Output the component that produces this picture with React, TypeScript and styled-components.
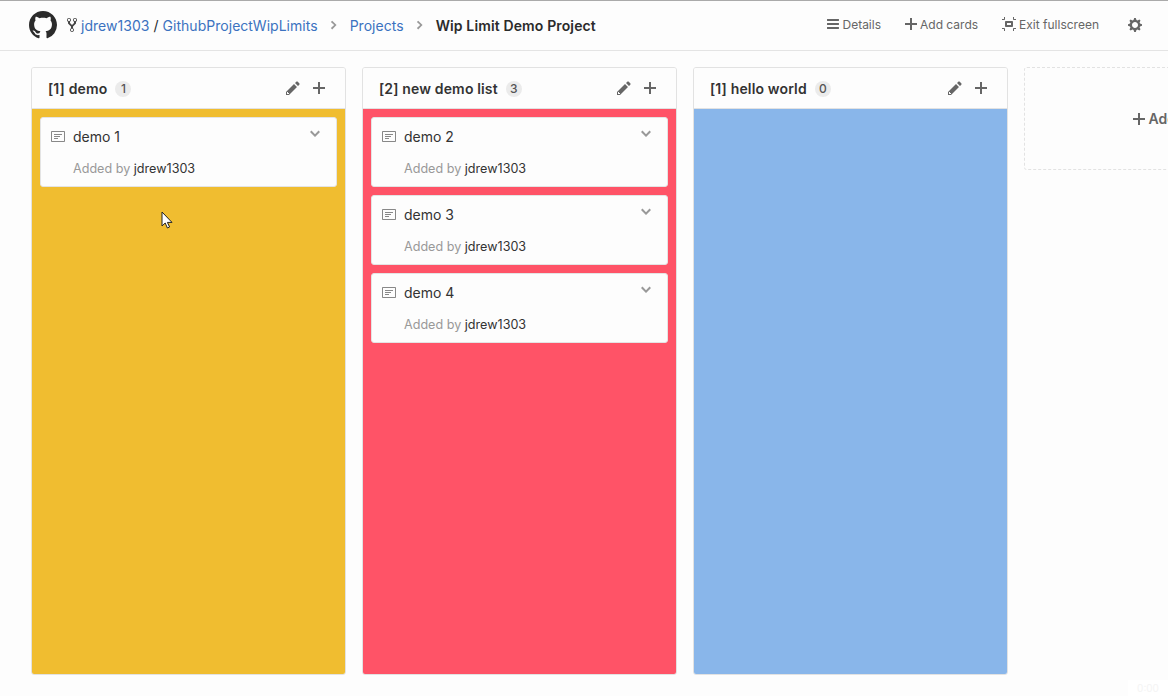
import React from "react";
import styled, { createGlobalStyle } from "styled-components";

const paths = {
  mark: "M8 0C3.58 0 0 3.58 0 8c0 3.54 2.29 6.53 5.47 7.59.4.07.55-.17.55-.38 0-.19-.01-.82-.01-1.49-2.01.37-2.53-.49-2.69-.94-.09-.23-.48-.94-.82-1.13-.28-.15-.68-.52-.01-.53.63-.01 1.08.58 1.23.82.72 1.21 1.87.87 2.33.66.07-.52.28-.87.51-1.07-1.78-.2-3.64-.89-3.64-3.95 0-.87.31-1.59.82-2.15-.08-.2-.36-1.02.08-2.12 0 0 .67-.21 2.2.82.64-.18 1.32-.27 2-.27.68 0 1.36.09 2 .27 1.53-1.04 2.2-.82 2.2-.82.44 1.1.16 1.92.08 2.12.51.56.82 1.27.82 2.15 0 3.07-1.87 3.75-3.65 3.95.29.25.54.73.54 1.48 0 1.07-.01 1.93-.01 2.2 0 .21.15.46.55.38A8.013 8.013 0 0 0 16 8c0-4.42-3.58-8-8-8z",
  fork: "M8 1a1.993 1.993 0 0 0-1 3.72V6L5 8 3 6V4.72A1.993 1.993 0 0 0 2 1a1.993 1.993 0 0 0-1 3.72V6.5l3 3v1.78A1.993 1.993 0 0 0 5 15a1.993 1.993 0 0 0 1-3.72V9.5l3-3V4.72A1.993 1.993 0 0 0 8 1zM2 4.2C1.34 4.2.8 3.65.8 3c0-.65.55-1.2 1.2-1.2.65 0 1.2.55 1.2 1.2 0 .65-.55 1.2-1.2 1.2zm3 10c-.66 0-1.2-.55-1.2-1.2 0-.65.55-1.2 1.2-1.2.65 0 1.2.55 1.2 1.2 0 .65-.55 1.2-1.2 1.2zm3-10c-.66 0-1.2-.55-1.2-1.2 0-.65.55-1.2 1.2-1.2.65 0 1.2.55 1.2 1.2 0 .65-.55 1.2-1.2 1.2z",
  pencil: "M0 12v3h3l8-8-3-3-8 8zm3 2H1v-2h1v1h1v1zm10.3-9.3L12 6 9 3l1.3-1.3a.996.996 0 0 1 1.41 0l1.59 1.59c.39.39.39 1.02 0 1.41z",
  gear: "M14 8.77v-1.6l-1.94-.64-.45-1.09.88-1.84-1.13-1.13-1.81.91-1.09-.45-.69-1.92h-1.6l-.63 1.94-1.11.45-1.84-.88-1.13 1.13.91 1.81-.45 1.09L0 7.23v1.59l1.94.64.45 1.09-.88 1.84 1.13 1.13 1.81-.91 1.09.45.69 1.92h1.59l.63-1.94 1.11-.45 1.84.88 1.13-1.13-.92-1.81.47-1.09L14 8.75v.02zM7 11c-1.66 0-3-1.34-3-3s1.34-3 3-3 3 1.34 3 3-1.34 3-3 3z",
  bars: "M11.41 9H.59C0 9 0 8.59 0 8c0-.59 0-1 .59-1H11.4c.59 0 .59.41.59 1 0 .59 0 1-.59 1h.01zm0-4H.59C0 5 0 4.59 0 4c0-.59 0-1 .59-1H11.4c.59 0 .59.41.59 1 0 .59 0 1-.59 1h.01zM.59 11H11.4c.59 0 .59.41.59 1 0 .59 0 1-.59 1H.59C0 13 0 12.59 0 12c0-.59 0-1 .59-1z",
  plus: "M12 9H7v5H5V9H0V7h5V2h2v5h5v2z",
  screen: "M2 4H0V3h2V1h1v2c0 .547-.453 1-1 1zm0 8H0v1h2v2h1v-2c0-.547-.453-1-1-1zm9-2c0 .547-.453 1-1 1H4c-.547 0-1-.453-1-1V6c0-.547.453-1 1-1h6c.547 0 1 .453 1 1v4zM9 7H5v2h4V7zm2 6v2h1v-2h2v-1h-2c-.547 0-1 .453-1 1zm1-10V1h-1v2c0 .547.453 1 1 1h2V3h-2z",
  note: "M3 10h4V9H3v1zm0-2h6V7H3v1zm0-2h8V5H3v1zm10 6H1V3h12v9zM1 2c-.55 0-1 .45-1 1v9c0 .55.45 1 1 1h12c.55 0 1-.45 1-1V3c0-.55-.45-1-1-1H1z",
  down: "M5 11L0 6l1.5-1.5L5 8.25 8.5 4.5 10 6l-5 5z",
  right: "M7.5 8l-5 5L1 11.5 4.75 8 1 4.5 2.5 3l5 5z",
};

const widths: Record<keyof typeof paths, number> = {
  mark: 16, fork: 10, pencil: 14, gear: 14, bars: 12, plus: 12, screen: 14, note: 14, down: 10, right: 8,
};

function Octicon({ name, height = 16, color = "#666" }: { name: keyof typeof paths; height?: number; color?: string }) {
  const w = widths[name];
  return (
    <svg width={(w * height) / 16} height={height} viewBox={`0 0 ${w} 16`} fill={color} style={{ flex: "none", display: "block" }}>
      <path fillRule="evenodd" d={paths[name]} />
    </svg>
  );
}

const GlobalStyle = createGlobalStyle`
  html, body {
    margin: 0;
    background: #fdfdfd;
  }
  body {
    font-family: Inter, "Liberation Sans", sans-serif;
    font-size: 14px;
    color: #24292e;
  }
`;

const Page = styled.div`
  position: relative;
  width: 1168px;
  height: 696px;
  overflow: hidden;
  background: #fdfdfd;
  border-top: 1px solid #aaaaaa;
  box-sizing: border-box;
`;

const TopBar = styled.header`
  height: 50px;
  box-sizing: border-box;
  border-bottom: 1px solid #e4e4e4;
  padding: 0 26px 1px 29px;
  display: flex;
  align-items: center;
  justify-content: space-between;
`;

const Crumbs = styled.nav`
  display: flex;
  align-items: center;
`;

const Logo = styled.span`
  margin-right: 10px;
`;

const ForkIcon = styled.span`
  margin-right: 4px;
`;

const Link = styled.a`
  color: #3b72c0;
  font-size: 14px;
  letter-spacing: 0.03px;
`;

const Slash = styled.span`
  margin: 0 4px;
  color: #24292e;
`;

const Sep = styled.span`
  margin: 0 13px 0 12px;
`;

const Current = styled.span`
  font-weight: 600;
  color: #2b2b2b;
  letter-spacing: 0.13px;
`;

const Actions = styled.div`
  display: flex;
  align-items: center;
  gap: 24px;
`;

const Action = styled.span`
  display: flex;
  align-items: center;
  gap: 3px;
  margin-bottom: 2px;
  font-size: 12px;
  color: #666;
`;

const Settings = styled(Action)`
  margin: 0 0 0 5px;
`;

const Board = styled.main`
  display: flex;
  gap: 16px;
  padding: 16px 0 0 31px;
  width: 1400px;
  height: 625px;
  box-sizing: border-box;
`;

const Column = styled.section`
  width: 315px;
  flex: none;
  height: 608px;
  box-sizing: border-box;
  border: 1px solid #e2e2e2;
  border-radius: 3px;
  overflow: hidden;
  display: flex;
  flex-direction: column;
`;

const ColumnHead = styled.div`
  height: 41px;
  flex: none;
  box-sizing: border-box;
  border-bottom: 1px solid #e2e2e2;
  padding: 0 20px 0 16px;
  display: flex;
  align-items: center;
  background: #fdfdfd;
`;

const ColumnTitle = styled.span`
  font-weight: 600;
  font-size: 14px;
  color: #333;
  letter-spacing: 0.15px;
`;

const Count = styled.span`
  margin: 2px 0 0 8px;
  min-width: 16px;
  height: 16px;
  box-sizing: border-box;
  padding: 0 4px;
  border-radius: 8px;
  background: #ebebeb;
  color: #555;
  font-size: 12px;
  font-weight: 500;
  line-height: 16px;
  text-align: center;
`;

const HeadIcons = styled.div`
  margin-left: auto;
  display: flex;
  align-items: center;
  gap: 13px;
`;

const CardList = styled.div<{ $bg: string }>`
  flex: 1;
  background: ${(p) => p.$bg};
  padding: 8px;
  display: flex;
  flex-direction: column;
  gap: 8px;
`;

const Card = styled.article`
  height: 70px;
  box-sizing: border-box;
  background: #fdfdfd;
  border: 1px solid #e4e4e4;
  border-radius: 3px;
  padding: 10px 16px 0 10px;
`;

const CardTop = styled.div`
  display: flex;
  align-items: center;
  height: 18px;
`;

const CardTitle = styled.span`
  margin: -2px 0 0 8px;
  font-size: 14px;
  color: #333;
`;

const Chevron = styled.span`
  margin-left: auto;
  margin-top: -6px;
`;

const CardMeta = styled.div`
  margin: 15px 0 0 22px;
  font-size: 12.6px;
  color: #999;
  white-space: nowrap;
`;

const Author = styled.span`
  color: #333;
`;

const AddColumn = styled.div`
  width: 315px;
  flex: none;
  height: 103px;
  box-sizing: border-box;
  border: 1px dashed #e2e2e2;
  border-radius: 3px;
  display: flex;
  align-items: center;
  justify-content: center;
  gap: 3px;
  font-size: 14px;
  font-weight: 600;
  color: #666;
`;

const Cursor = styled.svg`
  position: absolute;
  left: 161px;
  top: 210px;
`;

const Timer = styled.div`
  position: absolute;
  right: 0;
  bottom: 0;
  width: 40px;
  height: 16px;
  background: #fff;
  color: #f4f4f4;
  font-size: 10px;
  line-height: 16px;
  text-align: center;
`;

type Item = { title: string };
type Col = { name: string; bg: string; items: Item[] };

const columns: Col[] = [
  { name: "[1] demo", bg: "#f0bd30", items: [{ title: "demo 1" }] },
  { name: "[2] new demo list", bg: "#ff5367", items: [{ title: "demo 2" }, { title: "demo 3" }, { title: "demo 4" }] },
  { name: "[1] hello world", bg: "#89b6ea", items: [] },
];

export default function App() {
  return (
    <Page>
      <GlobalStyle />
      <TopBar>
        <Crumbs>
          <Logo>
            <Octicon name="mark" height={28} color="#2b2b2b" />
          </Logo>
          <ForkIcon>
            <Octicon name="fork" height={16} color="#444" />
          </ForkIcon>
          <Link>jdrew1303</Link>
          <Slash>/</Slash>
          <Link>GithubProjectWipLimits</Link>
          <Sep>
            <Octicon name="right" height={14} color="#999" />
          </Sep>
          <Link>Projects</Link>
          <Sep>
            <Octicon name="right" height={14} color="#999" />
          </Sep>
          <Current>Wip Limit Demo Project</Current>
        </Crumbs>
        <Actions>
          <Action>
            <Octicon name="bars" />
            Details
          </Action>
          <Action>
            <Octicon name="plus" />
            Add cards
          </Action>
          <Action>
            <Octicon name="screen" />
            Exit fullscreen
          </Action>
          <Settings>
            <Octicon name="gear" />
          </Settings>
        </Actions>
      </TopBar>
      <Board>
        {columns.map((col) => (
          <Column key={col.name}>
            <ColumnHead>
              <ColumnTitle>{col.name}</ColumnTitle>
              <Count>{col.items.length}</Count>
              <HeadIcons>
                <Octicon name="pencil" color="#666" />
                <Octicon name="plus" color="#666" />
              </HeadIcons>
            </ColumnHead>
            <CardList $bg={col.bg}>
              {col.items.map((item) => (
                <Card key={item.title}>
                  <CardTop>
                    <Octicon name="note" color="#888" />
                    <CardTitle>{item.title}</CardTitle>
                    <Chevron>
                      <Octicon name="down" color="#999" />
                    </Chevron>
                  </CardTop>
                  <CardMeta>
                    Added by <Author>jdrew1303</Author>
                  </CardMeta>
                </Card>
              ))}
            </CardList>
          </Column>
        ))}
        <AddColumn>
          <Octicon name="plus" />
          Add column
        </AddColumn>
      </Board>
      <Cursor width="12" height="19" viewBox="0 0 12 19">
        <path d="M1 1v14l3.2-3 2.2 5 2.2-1-2.2-4.6H11z" fill="#fff" stroke="#222" strokeWidth="1" />
      </Cursor>
      <Timer>0:00</Timer>
    </Page>
  );
}
